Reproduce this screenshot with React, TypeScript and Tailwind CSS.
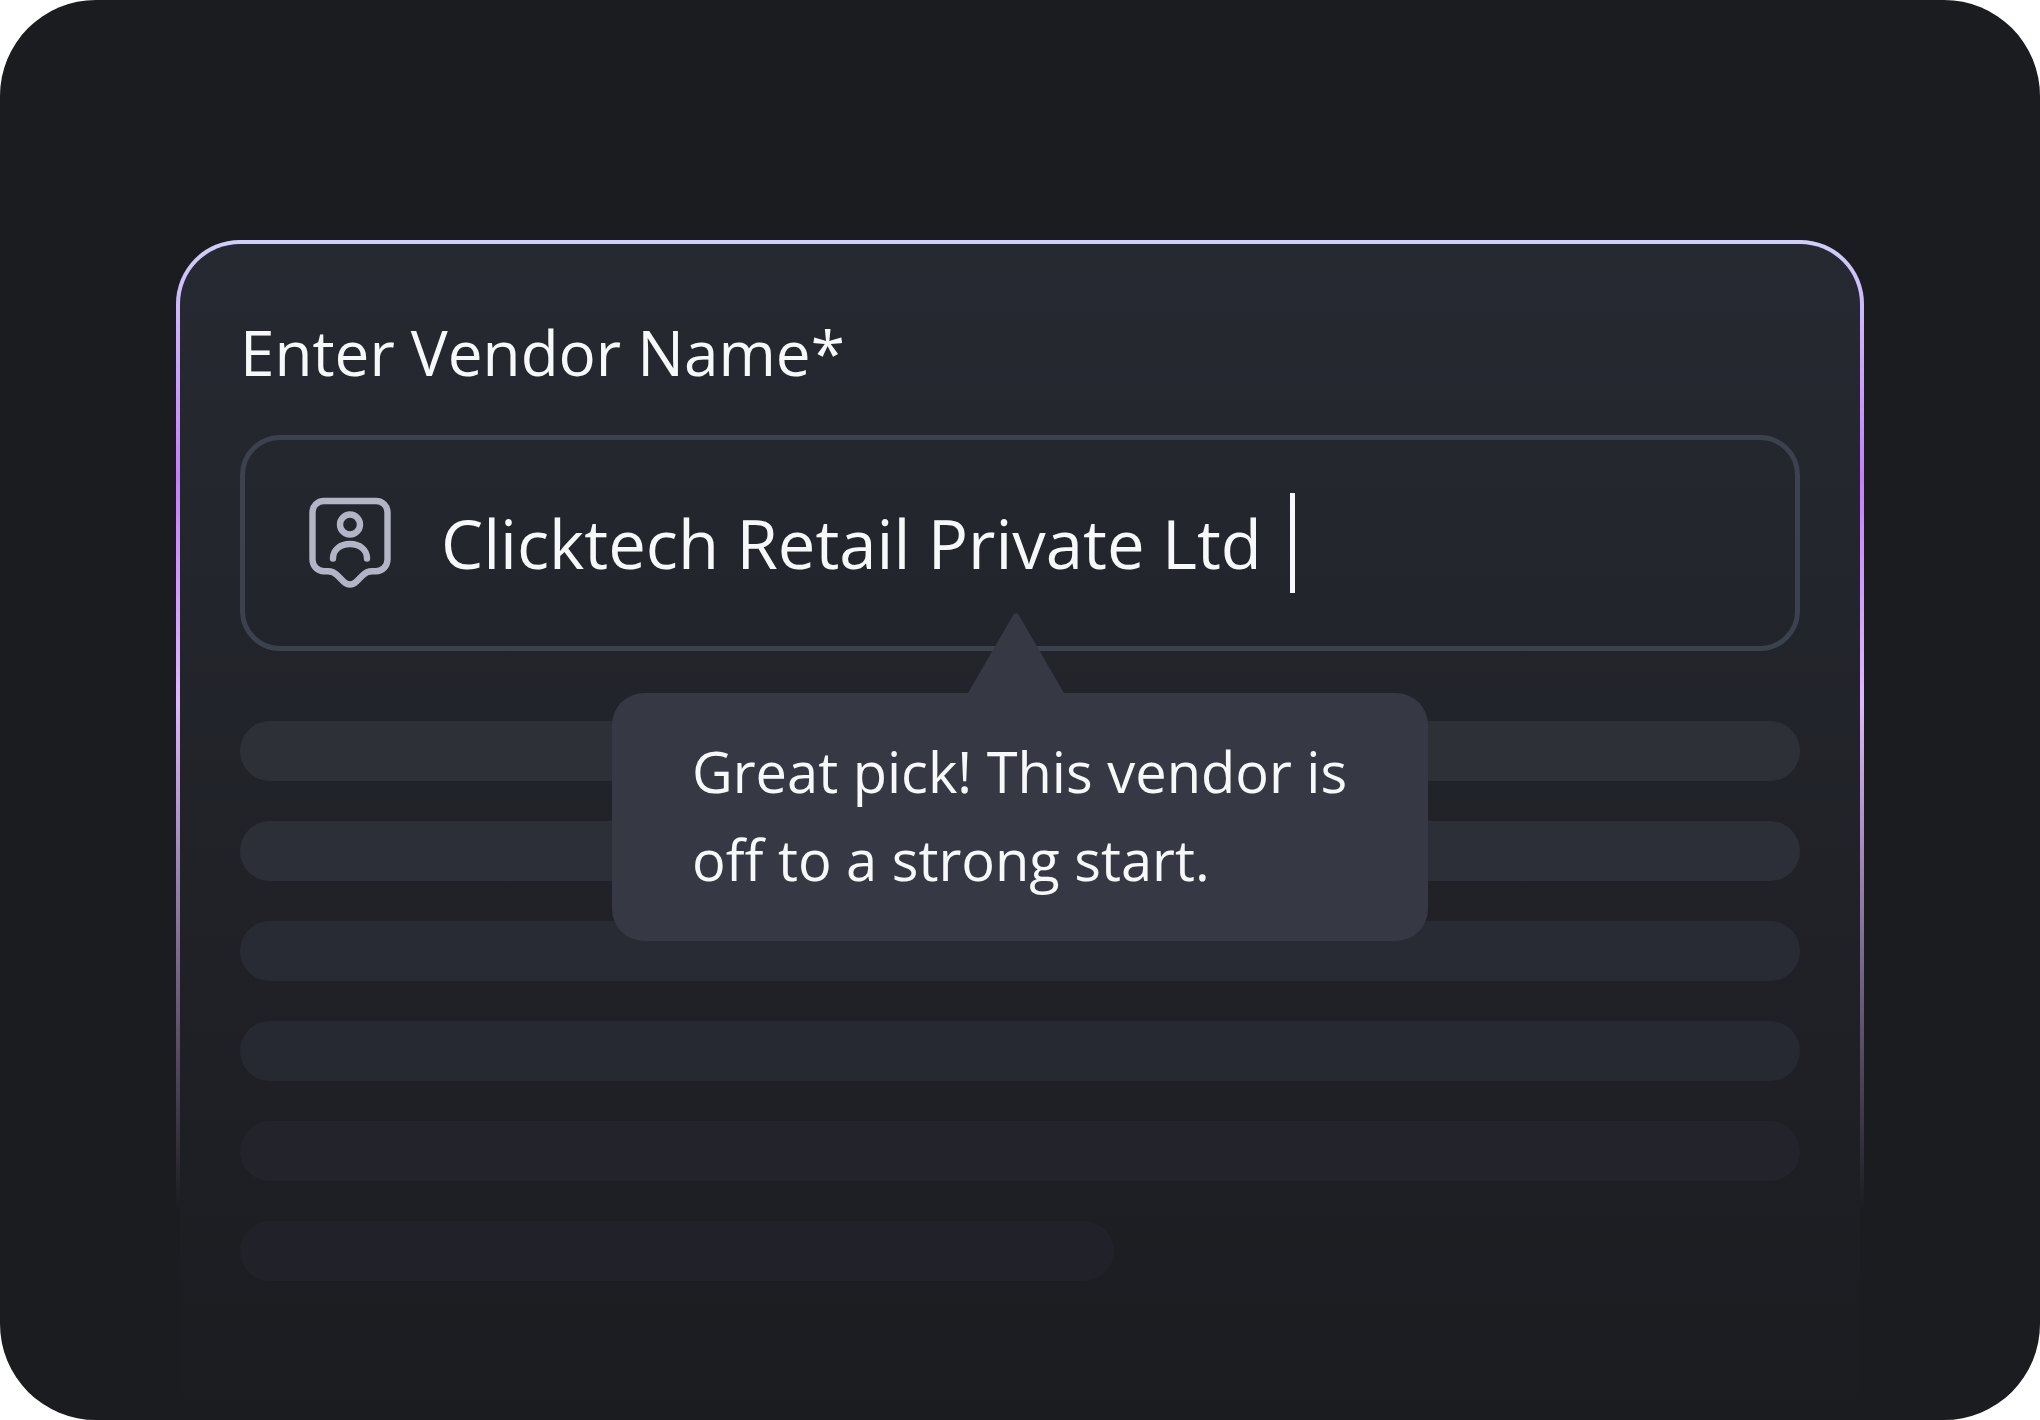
const PLACEHOLDER_BARS = [
  "w-full bg-[#2e3038]",
  "w-full bg-[#2d2f38]",
  "w-full bg-[#282b34]",
  "w-full bg-[#272932]",
  "w-full bg-[#23242b]",
  "w-[56%] bg-[#212229]",
];

const VendorIcon = () => (
  <svg
    viewBox="0 0 82 92"
    fill="none"
    stroke="#b1b5c5"
    strokeWidth="6.4"
    strokeLinecap="round"
    strokeLinejoin="round"
    className="w-[82px] h-[92px] shrink-0"
    aria-hidden="true"
  >
    <path d="M15 4H67C73.500 4 78.500 9 78.500 15.500V62.500C78.500 69 73.500 74.300 67 74.300H63C58 74.300 56 76 53.500 78.500L47.500 84.500C43.500 88.500 38.500 88.500 34.500 84.500L28.500 78.500C26 76 24 74.300 19 74.300H15C8.500 74.300 3.500 69 3.500 62.500V15.500C3.500 9 8.500 4 15 4Z" />
    <circle cx="41" cy="27.500" r="10" />
    <path d="M24 61.500C24 52.500 31.500 47 41 47C50.500 47 58 52.500 58 61.500" />
  </svg>
);

const Tooltip = () => (
  <div
    role="tooltip"
    className="absolute top-full left-1/2 -translate-x-1/2 mt-[42px] w-[816px] h-[248px] rounded-[32px] bg-[#363843] pl-20 pt-[34px] text-[56px] leading-[88px] text-[#f7f8fa]"
  >
    <svg
      viewBox="0 0 96 80"
      fill="#363843"
      className="absolute bottom-full left-[356px] w-24 h-20"
      aria-hidden="true"
    >
      <path d="M45.500 1.500Q48 -1.500 50.500 1.500L96 80H0Z" />
    </svg>
    Great pick! This vendor is
    <br />
    off to a strong start.
  </div>
);

export default function App() {
  return (
    <div className="bg-white font-['Open_Sans',sans-serif]">
      <main className="min-h-screen flex flex-col rounded-[96px] bg-[#1b1c20] pt-60 px-44">
        <div className="flex-1 flex flex-col rounded-t-[64px] bg-[linear-gradient(to_bottom,#d0cffc_0%,#c77dfc_20%,#dfb6ff_39%,#1b1c20_82%)] pt-1 px-1">
          <section className="flex-1 rounded-t-[60px] bg-linear-to-b from-[#262931] to-[#1b1c20] px-[60px] pt-16">
            <label
              htmlFor="vendor"
              className="block text-[62px] leading-[88px] text-[#f7f8fa]"
            >
              Enter Vendor Name*
            </label>

            <div className="relative mt-[39px]">
              <div className="flex items-center h-[216px] rounded-[40px] border-[5px] border-[#3b414d] pl-16">
                <VendorIcon />
                <input
                  id="vendor"
                  type="text"
                  defaultValue="Clicktech Retail Private Ltd"
                  className="field-sizing-content ml-[50px] bg-transparent text-[67px] leading-[88px] text-[#f7f8fa] outline-none"
                />
                <span className="ml-7 w-[5px] h-25 bg-[#f7f8fa]" />
              </div>
              <Tooltip />
            </div>

            <div className="mt-[70px] flex flex-col gap-10">
              {PLACEHOLDER_BARS.map((bar, i) => (
                <div key={i} className={`h-15 rounded-full ${bar}`} />
              ))}
            </div>
          </section>
        </div>
      </main>
    </div>
  );
}
